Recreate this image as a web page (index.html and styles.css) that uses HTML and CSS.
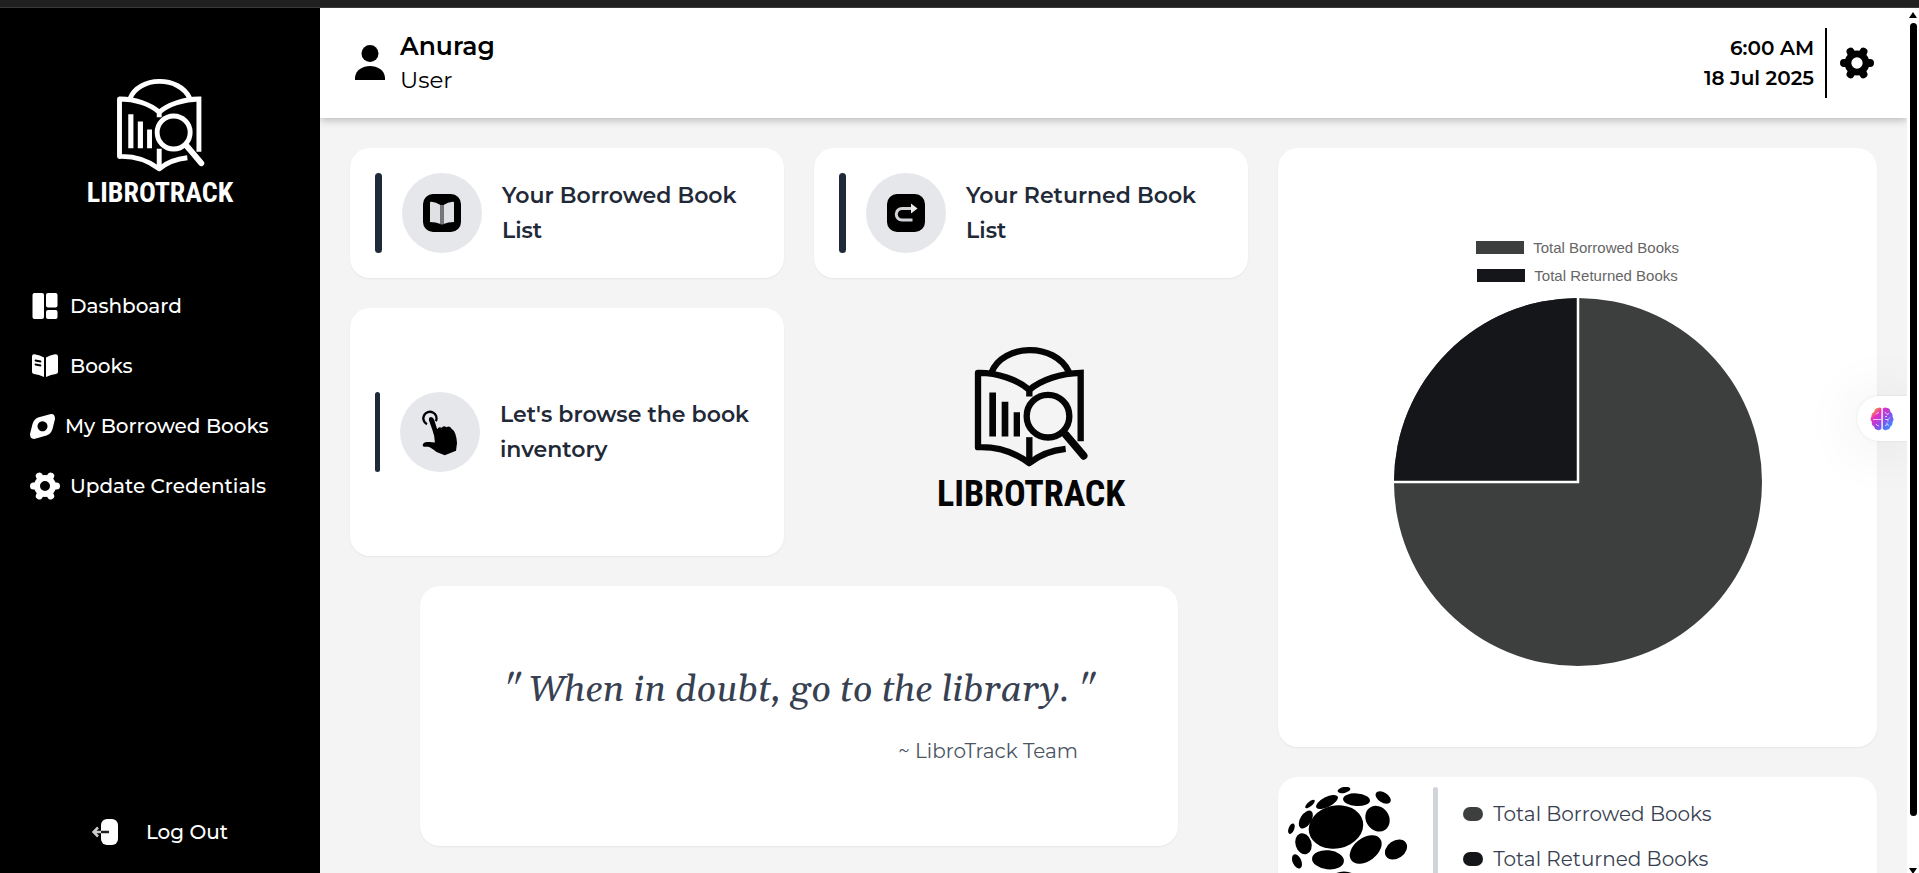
FILE: index.html
```html
<!DOCTYPE html>
<html lang="en">
<head>
<meta charset="utf-8">
<title>LibroTrack</title>
<link rel="stylesheet" href="styles.css">
</head>
<body>
<svg class="defs" aria-hidden="true">
  <symbol id="logo" viewBox="180 40 360 380">
    <g fill="none" stroke="currentColor" stroke-width="19">
      <path d="M242 127C275 42 432 36 474 127"/>
      <path stroke-linejoin="round" d="M355 200V180C320 150 260 128 201 129V352C260 350 310 366 355 400C385 375 425 361 464 357"/>
      <path d="M355 180C390 150 450 130 509 129V334"/>
      <path d="M355 322V395"/>
      <circle cx="411" cy="259" r="64"/>
    </g>
    <path d="M464 314L518 378" stroke="currentColor" stroke-width="23" stroke-linecap="round"/>
    <path d="M449 301L470 326" stroke="currentColor" stroke-width="15"/>
    <path d="M235 188h20v132h-20zM272 216h20v104h-20zM308 247h19v73h-19z" fill="currentColor"/>
  </symbol>
  <symbol id="gear" viewBox="0 0 30 30">
    <circle cx="15" cy="15" r="8" fill="none" stroke="currentColor" stroke-width="6"/>
    <path d="M24 15h2.500M6 15H3.500M19.500 7.200l1.200-2.100M10.500 7.200l-1.200-2.100M19.500 22.800l1.200 2.100M10.500 22.800l-1.200 2.100" stroke="currentColor" stroke-width="7" stroke-linecap="round"/>
  </symbol>
</svg>

<div class="top-strip"></div>
<div class="shell">
  <aside class="sidebar">
    <div class="brand side-brand"><svg aria-hidden="true"><use href="#logo"/></svg><span>LIBROTRACK</span></div>
    <nav class="nav">
      <a class="nav-link" href="#">
        <svg width="30" height="30" viewBox="0 0 30 30" fill="currentColor"><rect x="2.500" y="2" width="11.500" height="26" rx="2"/><rect x="16" y="2" width="11.500" height="14.500" rx="2"/><rect x="16" y="19" width="11.500" height="9" rx="2"/></svg>
        Dashboard</a>
      <a class="nav-link" href="#">
        <svg width="30" height="30" viewBox="0 0 30 30"><path fill="currentColor" d="M2 5.500Q2 3 4.500 3.300Q10 4 14 6.500V26Q9 23.500 4 23Q2 22.500 2 21zM16 6.500Q20 4 25 3.300Q28 3 28 5.500V21Q28 22.500 26 23Q21 23.500 16 26z"/><path d="M5.500 9.500l5 1M5.500 13.500l5 1" stroke="#000" stroke-width="1.800" stroke-linecap="round"/></svg>
        Books</a>
      <a class="nav-link" href="#">
        <svg width="25" height="25" viewBox="0 0 25 25"><path fill="currentColor" fill-rule="evenodd" d="M8 3.500L20 .3Q25-.8 25 5L22.500 15Q21 20 16.500 21.500L5 24.800Q0 25.600 0 20L2.500 10Q4 5 8 3.500zM12.500 7.300a5 5 0 1 0 .01 0z"/></svg>
        My Borrowed Books</a>
      <a class="nav-link" href="#">
        <svg width="30" height="30"><use href="#gear"/></svg>
        Update Credentials</a>
    </nav>
    <button class="logout" type="button">
      <svg width="26" height="26" viewBox="0 0 26 26"><rect x="9" width="17" height="26" rx="6" fill="#fff"/><path d="M9 13h8" stroke="#222" stroke-width="2.500"/><path d="M9 13H2M6 8.500L1.500 13L6 17.500" fill="none" stroke="#ccc" stroke-width="2.500"/></svg>
      Log Out</button>
  </aside>

  <div class="page">
    <header class="header">
      <div class="user">
        <svg width="30" height="36" viewBox="0 0 30 36"><circle cx="15" cy="8.500" r="8.500"/><path d="M0 35V32.500C1 17 29 17 30 32.500V35z"/></svg>
        <div><div class="user-name">Anurag</div><div class="user-role">User</div></div>
      </div>
      <div class="header-right">
        <div class="clock"><div>6:00 AM</div><div>18 Jul 2025</div></div>
        <button class="settings" type="button" aria-label="Settings"><svg width="34" height="34"><use href="#gear"/></svg></button>
      </div>
    </header>

    <main class="main">
      <section class="left">
        <div class="tiles">
          <a class="card tile" href="#">
            <span class="bar"></span>
            <span class="disc"><svg width="38" height="38" viewBox="0 0 38 38"><rect width="38" height="38" rx="10"/><path fill="#e0e1e5" d="M7 8.500Q7 7.500 8.500 7.700Q13 8 17.500 11V30Q13 28 7 28zM31 8.500Q31 7.500 29.500 7.700Q25 8 20.500 11V30Q25 28 31 28z"/><path d="M19 11v19.500" stroke="#777" stroke-width="3"/></svg></span>
            <span class="tile-text">Your Borrowed Book List</span>
          </a>
          <a class="card tile" href="#">
            <span class="bar"></span>
            <span class="disc"><svg width="38" height="38" viewBox="0 0 38 38"><rect width="38" height="38" rx="10"/><path d="M25.500 26H15A5.700 5.700 0 0 1 15 14.500H25" fill="none" stroke="#d2d3d7" stroke-width="3"/><path fill="#eee" d="M24 9.500L30.500 14.500L24 19.500z"/></svg></span>
            <span class="tile-text">Your Returned Book List</span>
          </a>
          <a class="card tile tile-tall" href="#">
            <span class="bar bar-thin"></span>
            <span class="disc"><svg width="38" height="47" viewBox="245 352 115 142"><path d="M263 398A20 20 0 1 1 290 389" fill="none" stroke="#000" stroke-width="7"/><path d="M269 386Q268 376 276 376Q283 377 285 385L294 413Q299 404 307 409Q313 400 322 407Q332 402 337 411Q352 421 354 455L351 478L317 492L292 482Q276 468 266 466L253 466Q247 461 252 456Q258 450 270 452L287 453Q286 431 279 414z"/></svg></span>
            <span class="tile-text">Let's browse the book inventory</span>
          </a>
          <div class="brand main-brand"><svg aria-hidden="true"><use href="#logo"/></svg><span>LIBROTRACK</span></div>
        </div>
        <blockquote class="card quote">
          <p class="quote-text">" When in doubt, go to the library. "</p>
          <footer class="quote-by">~ LibroTrack Team</footer>
        </blockquote>
      </section>

      <section class="right">
        <div class="card chart">
          <ul class="legend">
            <li><span class="swatch borrowed"></span>Total Borrowed Books</li>
            <li><span class="swatch returned"></span>Total Returned Books</li>
          </ul>
          <svg class="pie" viewBox="0 0 368 368" role="img" aria-label="Borrowed 75%, returned 25%">
            <circle cx="184" cy="184" r="184" fill="#3d3e3e"/>
            <path d="M184 184H0A184 184 0 0 1 184 0z" fill="#15161a"/>
            <path d="M184 0V184H0" fill="none" stroke="#fff" stroke-width="2.500"/>
          </svg>
        </div>
        <div class="card summary">
          <svg width="120" height="120" viewBox="0 0 120 120">
            <ellipse cx="48" cy="40" rx="27.500" ry="21.500" transform="rotate(-12 48 40)"/>
            <ellipse cx="56" cy="3" rx="6.500" ry="3" transform="rotate(-12 56 3)"/>
            <ellipse cx="39" cy="15" rx="12" ry="5" transform="rotate(-27 39 15)"/>
            <ellipse cx="68.500" cy="12.700" rx="13.500" ry="6.300" transform="rotate(4 68 13)"/>
            <ellipse cx="95.400" cy="10.300" rx="8.500" ry="5" transform="rotate(32 95 10)"/>
            <ellipse cx="22" cy="17" rx="6" ry="2.300" transform="rotate(-40 22 17)"/>
            <ellipse cx="17.600" cy="32.700" rx="5.500" ry="10" transform="rotate(32 18 33)"/>
            <ellipse cx="89.500" cy="31.700" rx="11.500" ry="13.500" transform="rotate(-35 89.500 31.700)"/>
            <ellipse cx="3.400" cy="41.700" rx="2.800" ry="5.500" transform="rotate(22 3.400 41.700)"/>
            <ellipse cx="15.500" cy="56.700" rx="8" ry="10.700" transform="rotate(-18 15.500 56.700)"/>
            <ellipse cx="77.700" cy="62.500" rx="18" ry="11.500" transform="rotate(-37 77.700 62.500)"/>
            <ellipse cx="108" cy="62.500" rx="12" ry="8.800" transform="rotate(-35 108 62.500)"/>
            <ellipse cx="40" cy="72.800" rx="16" ry="9.500" transform="rotate(6 40 72.800)"/>
            <ellipse cx="9" cy="74.400" rx="4.300" ry="7.500" transform="rotate(-25 9 74.400)"/>
            <ellipse cx="56" cy="91" rx="12" ry="6.500"/>
          </svg>
          <span class="rule"></span>
          <ul class="totals">
            <li><span class="dot borrowed"></span>Total Borrowed Books</li>
            <li><span class="dot returned"></span>Total Returned Books</li>
          </ul>
        </div>
      </section>
    </main>
    <button class="assistant" type="button" aria-label="Assistant">
      <svg width="24" height="24" viewBox="0 0 24 24">
        <defs><linearGradient id="brain" x1="0" y1="0" x2="1" y2="1"><stop offset="0.080" stop-color="#ffa01e"/><stop offset="0.300" stop-color="#e62ec0"/><stop offset="0.600" stop-color="#8450f0"/><stop offset="1" stop-color="#14a8ff"/></linearGradient></defs>
        <path fill="url(#brain)" d="M11.400 1.500V22Q9 24 6.500 22.500Q4.500 22 4 19.500Q1 18 2 15Q-.5 12.500 1.500 9.500Q1 6.500 4 5Q5 1 8 1Q10 0 11.400 1.500zM12.800 1.500Q15 0 17 1Q20 1 20.500 5Q23 6.500 22.500 9.500Q24.500 12.500 22.500 15Q23 18 20.500 19.500Q20 22 17.500 22.500Q15 24 12.800 22z"/>
        <path d="M3 12.500h8M6 7.500Q7 5.500 9 5.500M6 17Q7 19 9 19M15 5l2 2.500l2-1M15 9.500h2M20 10.500l-2 2h-3M18 12.500v2M15 19l2-1.500v-2M17 17.500l2 1" fill="none" stroke="#fff" stroke-opacity=".7"/>
      </svg>
    </button>
  </div>

  <div class="scrollbar" aria-hidden="true">
    <svg width="8" height="6" viewBox="0 0 8 6"><path d="M4 0L8 6H0z"/></svg>
    <span class="thumb"></span>
    <svg width="8" height="5" viewBox="0 0 8 5"><path d="M4 6L8 0H0z"/></svg>
  </div>
</div>
</body>
</html>
```
FILE: styles.css
```css
* { box-sizing: border-box; }
body {
  margin: 0;
  height: 100vh;
  display: flex;
  flex-direction: column;
  overflow: hidden;
  background: #fff;
  color: #000;
  font-family: Montserrat, Inter, sans-serif;
  font-size: 20px;
}
ul, p, blockquote { margin: 0; padding: 0; list-style: none; }
a { color: inherit; text-decoration: none; }
button { border: 0; padding: 0; background: none; font: inherit; color: inherit; cursor: pointer; }
svg { flex: none; display: block; }
.defs { position: absolute; width: 0; height: 0; }

.top-strip { flex: none; height: 8px; background: #202020; border-bottom: 1px solid #3a3a3a; }
.shell { flex: 1; min-height: 0; display: grid; grid-template-columns: 320px minmax(0, 1fr) 12px; }

.sidebar { background: #000; color: #fff; display: flex; flex-direction: column; padding: 68px 30px 20px; }
.brand { display: flex; flex-direction: column; align-items: center; justify-content: center; gap: 4px; font-family: "Roboto Condensed", "Liberation Sans Narrow", Roboto, sans-serif; font-weight: 700; }
.side-brand { font-size: 28px; line-height: 30px; }
.side-brand svg { width: 93px; height: 98px; }
.main-brand { padding-bottom: 8px; color: #050505; font-size: 36px; line-height: 40px; }
.main-brand svg { width: 120px; height: 127px; }
.nav { margin-top: 68px; }
.nav-link { height: 60px; display: flex; align-items: center; gap: 10px; font-weight: 500; white-space: nowrap; }
.logout { margin-top: auto; height: 42px; display: flex; align-items: center; justify-content: center; gap: 28px; font-weight: 500; }

.page { position: relative; min-width: 0; min-height: 0; display: flex; flex-direction: column; background: #f4f4f4; overflow: hidden; }
.header {
  flex: none; height: 110px; padding: 0 33px 0 35px;
  display: flex; align-items: center; justify-content: space-between;
  background: #fff; box-shadow: 0 2px 8px rgba(0, 0, 0, .25);
}
.user { display: flex; align-items: center; gap: 15px; line-height: 34px; }
.user-name { font-size: 25px; font-weight: 600; }
.user-role { font-size: 23px; }
.header-right { display: flex; align-items: center; }
.clock { font-weight: 600; line-height: 30px; padding: 5px 11px; border-right: 2px solid #000; text-align: right; }
.settings { margin-left: 13px; }

.main { flex: 1; min-height: 0; padding: 30px; display: grid; grid-template-columns: 3fr 2fr; gap: 30px; align-items: start; }
.left, .right { min-width: 0; display: flex; flex-direction: column; gap: 30px; }
.card { background: #fff; border-radius: 20px; box-shadow: 0 1px 2px rgba(0, 0, 0, .06); }
.tiles { display: grid; grid-template-columns: 1fr 1fr; gap: 30px; }
.tile { display: flex; align-items: center; gap: 20px; padding: 25px; color: #1f2937; }
.tile-tall { min-height: 248px; }
.tile-text { font-size: 22px; line-height: 35px; font-weight: 600; }
.bar { flex: none; width: 7px; height: 80px; border-radius: 4px; background: #1f2937; }
.bar-thin { width: 5px; }
.disc { flex: none; width: 80px; height: 80px; border-radius: 50%; background: #e5e7eb; display: grid; place-items: center; }

.quote { align-self: center; width: 758px; max-width: 100%; height: 260px; padding: 0 80px 5px; display: flex; flex-direction: column; justify-content: center; gap: 15px; }
.quote-text { font: italic 37px/60px Georgia, Gelasio, "Liberation Serif", serif; color: #374151; text-align: center; white-space: nowrap; }
.quote-by { padding-right: 20px; text-align: right; font-weight: 400; line-height: 30px; color: #4b5563; }

.chart { aspect-ratio: 1; padding-top: 5px; display: flex; flex-direction: column; align-items: center; justify-content: center; gap: 8px; }
.legend { font: 15px/28px "Liberation Sans", Arial, sans-serif; color: #666; }
.legend li { display: flex; align-items: center; justify-content: center; gap: 9px; }
.swatch { width: 48px; height: 13px; }
.borrowed { background: #3d3e3e; }
.returned { background: #15161a; }
.pie { width: 368px; height: 368px; }

.summary { padding: 10px; display: flex; min-height: 180px; }
.rule { margin-left: 25px; width: 5px; border-radius: 3px; background: #d1d5db; }
.totals { margin-left: 25px; padding-top: 5px; font-weight: 400; line-height: 45px; color: #374151; }
.totals li { display: flex; align-items: center; gap: 10px; }
.dot { width: 20px; height: 14px; border-radius: 7px; }

.assistant {
  position: absolute; right: 0; top: 388px; width: 50px; height: 45px;
  display: grid; place-items: center; background: #fff;
  border-radius: 23px 0 0 23px; box-shadow: 0 4px 60px rgba(0, 0, 0, .1), 0 0 3px rgba(0, 0, 0, .08);
}

.scrollbar { display: flex; flex-direction: column; align-items: center; gap: 5px; padding-top: 4px; background: #fff; }
.thumb { width: 7px; flex: 1; margin-bottom: 47px; border-radius: 4px; background: #000; }
```
